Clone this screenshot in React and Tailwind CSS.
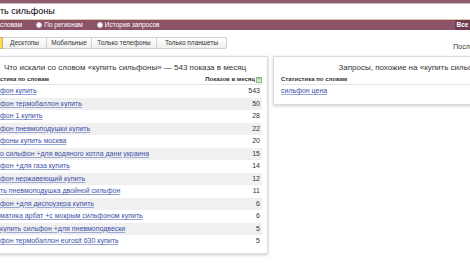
import React from "react";

// [part hidden past the left edge, visible part, count]
const rows = [
  ["силь", "фон купить", 543],
  ["силь", "фон термобаллон купить", 50],
  ["силь", "фон 1 купить", 28],
  ["силь", "фон пневмоподушки купить", 22],
  ["силь", "фоны купить москва", 20],
  ["недорог", "о сильфон +для водяного котла дани украина", 15],
  ["силь", "фон +для газа купить", 14],
  ["силь", "фон нержавеющий купить", 12],
  ["купи", "ть пневмоподушка двойной сильфон", 11],
  ["силь", "фон +для диспоузера купить", 6],
  ["пнев", "матика арбат +с мокрым сильфоном купить", 6],
  ["где\u00a0", "купить сильфон +для пневмоподвески", 5],
  ["силь", "фон термобаллон eurosit 630 купить", 5],
];

// text whose start runs off the left edge of the window
function Cut({ hidden, children, className = "" }) {
  return (
    <span className={`inline-flex whitespace-nowrap ${className}`}>
      <span className="w-0 flex justify-end">{hidden}</span>
      <span>{children}</span>
    </span>
  );
}

function Radio({ label }) {
  return (
    <span className="flex items-center gap-[2px]">
      <span className="w-[6px] h-[6px] rounded-full bg-white border border-[#d8c8d0]" />
      <span>{label}</span>
    </span>
  );
}

export default function App() {
  return (
    <div className="w-[470px] h-[264px] overflow-hidden bg-white font-['Liberation_Sans',Arial,sans-serif] text-[#222]">
      {/* top band */}
      <div className="h-[4px] bg-[#8d5a6e] border-b border-[#cdb3bd]" />

      {/* search input */}
      <div className="h-[16px] flex items-center border-b border-[#d9c9a6]">
        <Cut hidden="купи" className="text-[9px] text-black">ть сильфоны</Cut>
      </div>

      {/* purple options bar */}
      <div className="h-[10px] bg-[#8c5268] flex items-center text-[6.5px] text-white whitespace-nowrap">
        <Cut hidden={"По\u00a0"}>словам</Cut>
        <span className="ml-[14px]"><Radio label="По регионам" /></span>
        <span className="ml-[14px]"><Radio label="История запросов" /></span>
        <span className="ml-auto mr-[-30px] px-[2px] bg-[#6f3c52] font-bold">Все регионы</span>
      </div>

      {/* device tabs */}
      <div className="h-[26px] flex items-center whitespace-nowrap">
        <div className="flex text-[6.5px] text-[#333]">
          <span className="ml-[-10px] w-[13px] h-[12px] bg-[#ffdb4d] border border-[#c9b46b]" />
          <span className="h-[12px] w-[44px] flex items-center justify-center border border-l-0 border-[#cfcfcf] bg-gradient-to-b from-white to-[#eeeeee]">Десктопы</span>
          <span className="h-[12px] w-[45px] flex items-center justify-center border border-l-0 border-[#cfcfcf] bg-gradient-to-b from-white to-[#eeeeee]">Мобильные</span>
          <span className="h-[12px] w-[65px] flex items-center justify-center border border-l-0 border-[#cfcfcf] bg-gradient-to-b from-white to-[#eeeeee]">Только телефоны</span>
          <span className="h-[12px] w-[70px] flex items-center justify-center border border-l-0 border-[#cfcfcf] rounded-r-[2px] bg-gradient-to-b from-white to-[#eeeeee]">Только планшеты</span>
        </div>
        <span className="ml-auto mr-[-60px] mt-[8px] text-[7px] text-[#333]">Последнее обновление</span>
      </div>

      {/* cards */}
      <div className="flex items-start gap-[5px] ml-[-18px]">
        <div className="w-[286px] shrink-0 bg-white border border-[#dcdcdc] shadow-[0_1px_3px_rgba(0,0,0,0.2)] pt-[4px] pb-[5px] px-[5px]">
          <div className="text-center text-[8px] text-[#333] h-[14px] leading-[14px] whitespace-nowrap">
            Что искали со словом «купить сильфоны» — 543 показа в месяц
          </div>
          <div className="flex items-center justify-between h-[10px] pl-[12px] text-[6px] font-bold text-[#333] border-b border-[#e4e4e4]">
            <Cut hidden="Стати">стика по словам</Cut>
            <span className="flex items-center gap-[1px]">
              Показов в месяц
              <span className="w-[6px] h-[6px] border border-[#8fb08a] bg-[#e8f3e4] text-[5px] leading-[4px] text-center text-[#5a8a52] font-normal">?</span>
            </span>
          </div>
          <div>
            {rows.map(([h, v, n], i) => (
              <div
                key={i}
                className={`h-[12.5px] flex items-center justify-between pl-[12px] text-[7px] ${i % 2 === 1 ? "bg-[#f0f0f0]" : "bg-white"}`}
              >
                <Cut hidden={h} className="text-[#3b4fa8] underline decoration-[#9aa6d6]">{v}</Cut>
                <span className="pr-[2px] text-[#333]">{n}</span>
              </div>
            ))}
          </div>
        </div>

        <div className="w-[286px] shrink-0 bg-white border border-[#dcdcdc] shadow-[0_1px_3px_rgba(0,0,0,0.2)] pt-[4px] pb-[6px] px-[7px]">
          <div className="text-center text-[8px] text-[#333] h-[14px] leading-[14px] whitespace-nowrap">
            Запросы, похожие на «купить сильфоны»
          </div>
          <div className="h-[10px] flex items-center text-[6px] font-bold text-[#333] border-b border-[#e4e4e4]">
            Статистика по словам
          </div>
          <div className="h-[12.5px] flex items-center text-[7px]">
            <span className="text-[#3b4fa8] underline decoration-[#9aa6d6]">сильфон цена</span>
          </div>
        </div>
      </div>
    </div>
  );
}
